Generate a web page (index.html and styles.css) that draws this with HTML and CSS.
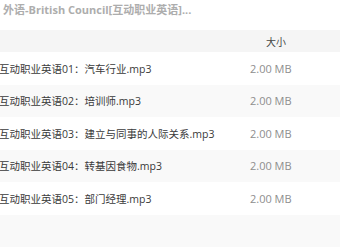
FILE: index.html
```html
<!DOCTYPE html>
<html>
<head>
<meta charset="utf-8">
<link rel="stylesheet" href="styles.css">
</head>
<body>
<div class="title">外语-British Council[互动职业英语]...</div>
<div class="table">
  <div class="row head"><div class="name"></div><div class="size">大小</div></div>
  <div class="row"><div class="name">互动职业英语01：汽车行业.mp3</div><div class="size">2.00 MB</div></div>
  <div class="row alt"><div class="name">互动职业英语02：培训师.mp3</div><div class="size">2.00 MB</div></div>
  <div class="row"><div class="name">互动职业英语03：建立与同事的人际关系.mp3</div><div class="size">2.00 MB</div></div>
  <div class="row alt"><div class="name">互动职业英语04：转基因食物.mp3</div><div class="size">2.00 MB</div></div>
  <div class="row"><div class="name">互动职业英语05：部门经理.mp3</div><div class="size">2.00 MB</div></div>
  <div class="row alt"><div class="name"></div><div class="size"></div></div>
</div>
</body>
</html>
```
FILE: styles.css
```css
html, body {
  margin: 0;
  padding: 0;
  background: #ffffff;
  width: 340px;
  height: 252px;
  overflow: hidden;
  font-family: "Open Sans", "Noto Sans CJK SC", sans-serif;
}
.title {
  height: 30px;
  line-height: 20px;
  padding-left: 3px;
  font-size: 11px;
  font-weight: bold;
  color: #adadad;
  white-space: nowrap;
}
.table {
  display: flex;
  flex-direction: column;
}
.row {
  display: grid;
  grid-template-columns: 250px 90px;
  height: 32.5px;
  align-items: center;
  font-size: 10.5px;
  background: #ffffff;
}
.row.alt {
  background: #f9f9f9;
}
.row.head {
  height: 22px;
  background: #f5f5f5;
}
.name {
  color: #3a3a3a;
  white-space: nowrap;
  margin-left: -1px;
}
.size {
  color: #8e8e8e;
  font-size: 11px;
}
.head .size {
  color: #444;
  font-size: 10px;
  padding-left: 16px;
}
```
